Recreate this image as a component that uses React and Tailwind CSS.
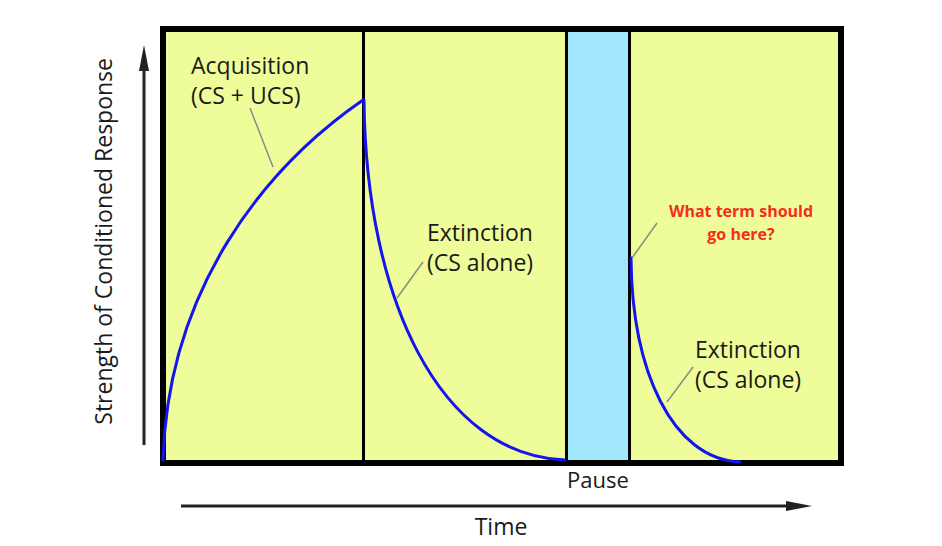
import React from 'react';

const YELLOW = 'bg-[#eefc99]';

const Label = ({ className, lines }) => (
    <div className={`absolute whitespace-nowrap text-[23px] leading-[30px] text-[#1a1a1a] ${className}`}>
        {lines.map(l => <div key={l}>{l}</div>)}
    </div>
);

const Curves = () => (
    <svg className="absolute inset-0 w-full h-full overflow-visible" viewBox="166 32 672 428">
        <g fill="none" stroke="#8a8a8a" strokeWidth="1.5">
            <path d="M250,108 L273,167" />
            <path d="M423,262 L397,298" />
            <path d="M657,223 L632,258" />
            <path d="M693,367 L667,402" />
        </g>
        <g fill="none" stroke="#1414f0" strokeWidth="3" strokeLinecap="round">
            <path d="M163,460 C168,290 263,169 363,100" />
            <path d="M364,100 C366,300 440,455 565,460" />
            <path d="M631,258 C632,371 672,459 740,462" />
        </g>
    </svg>
);

export default function App() {
    return (
        <div className="w-[942px] h-[546px] bg-white pt-[26px] font-['Open_Sans',sans-serif] text-[#1a1a1a] overflow-hidden">
            <div className="flex">
                {/* y axis */}
                <div className="w-[160px] h-[440px] flex items-center pl-[92px] pb-[10px]">
                    <div className="[writing-mode:vertical-rl] rotate-180 text-[23px] leading-[22px] w-[22px] whitespace-nowrap">
                        Strength of Conditioned Response
                    </div>
                    <svg className="ml-[25px] self-start mt-[19px]" width="10" height="400" viewBox="0 0 10 400">
                        <path d="M5,0 L10,26 L0,26 Z" fill="#222" />
                        <rect x="3.5" y="20" width="3" height="380" fill="#222" />
                    </svg>
                </div>

                {/* chart box */}
                <div className="relative w-[684px] h-[440px] border-[6px] border-black flex">
                    <div className={`w-[196px] ${YELLOW}`} />
                    <div className={`w-[203px] border-l-[3px] border-black ${YELLOW}`} />
                    <div className="w-[63px] border-l-[3px] border-black bg-[#a2e6fb]" />
                    <div className={`flex-1 border-l-[3px] border-black ${YELLOW}`} />

                    <Curves />

                    <Label className="left-[25px] top-[18px] leading-[29px]" lines={['Acquisition', '(CS + UCS)']} />
                    <Label className="left-[261px] top-[185px]" lines={['Extinction', '(CS alone)']} />
                    <Label className="left-[529px] top-[302px]" lines={['Extinction', '(CS alone)']} />
                    <div className="absolute left-[485px] top-[168px] w-[180px] text-center text-[16px] leading-[23px] font-bold text-[#f72c1c]">
                        <div>What term should</div>
                        <div>go here?</div>
                    </div>
                </div>
            </div>

            <div className="ml-[548px] w-[100px] text-center text-[22px] leading-[26px]">Pause</div>

            <svg className="block ml-[181px] mt-[9px]" width="632" height="10" viewBox="0 0 632 10">
                <rect x="0" y="3.5" width="612" height="3" fill="#222" />
                <path d="M605,0 L631,5 L605,10 Z" fill="#222" />
            </svg>

            <div className="ml-[451px] mt-[2px] w-[100px] text-center text-[23px] leading-[26px]">Time</div>
        </div>
    );
}
